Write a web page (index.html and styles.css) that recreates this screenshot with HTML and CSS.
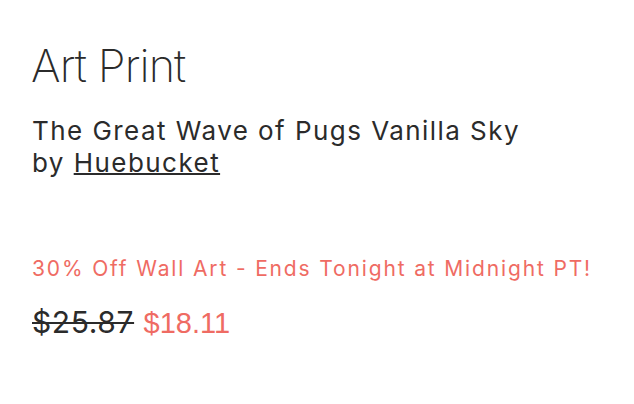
FILE: index.html
```html
<!DOCTYPE html>
<html>
<head>
<meta charset="utf-8">
<link rel="stylesheet" href="styles.css">
</head>
<body>
<main class="product">
  <h1 class="product-type">Art Print</h1>
  <p class="product-title">The Great Wave of Pugs Vanilla Sky<br>by <a class="artist" href="#">Huebucket</a></p>
  <p class="promo">30% Off Wall Art - Ends Tonight at Midnight PT!</p>
  <div class="prices"><span class="price-old">$25.87</span> <span class="price-new">$18.11</span></div>
</main>
</body>
</html>
```
FILE: styles.css
```css
html, body { margin: 0; background: #fff; }
body { font-family: Inter, "Noto Sans", sans-serif; color: #2b2b2b; }
.product { padding: 38px 32px 0 31px; }
.product-type {
  margin: 0;
  font-size: 45px;
  font-weight: 200;
  line-height: 56px;
  letter-spacing: -0.9px;
}
.product-title {
  margin: 21px 0 0 1px;
  font-size: 26px;
  font-weight: 400;
  line-height: 32px;
  letter-spacing: 1.45px;
}
.artist {
  color: #2b2b2b;
  text-decoration: underline;
  text-underline-offset: 1px;
  text-decoration-thickness: 2px;
}
.promo {
  margin: 76px 0 0 1px;
  font-size: 21px;
  line-height: 28px;
  color: #ef6b63;
  letter-spacing: 1.85px;
}
.prices { margin: 21px 0 0 1px; font-size: 30px; line-height: 36px; }
.price-old {
  text-decoration: line-through;
  text-decoration-thickness: 2px;
  color: #2b2b2b;
  letter-spacing: 0.6px;
}
.price-new {
  color: #ef6b63;
  font-family: "Liberation Sans", sans-serif;
  font-size: 29px;
  margin-left: 1px;
}
```
